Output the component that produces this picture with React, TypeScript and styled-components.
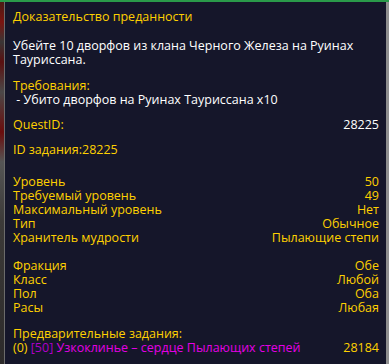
import React from "react";
import styled, { createGlobalStyle } from "styled-components";

const Global = createGlobalStyle`
  html, body { margin: 0; padding: 0; background: #15162a; }
  body { font-family: "Open Sans", "Noto Sans", sans-serif; }
`;

const Frame = styled.div`
  width: 389px;
  height: 364px;
  overflow: hidden;
  border-top: 2px solid #2a9a4a;
  box-sizing: border-box;
  display: flex;
  background: #15162a;
`;

const GameStrip = styled.div`
  width: 4px;
  flex: none;
  background: linear-gradient(
    180deg,
    #4a1a14 0px,
    #7a1410 20px,
    #3a3636 40px,
    #5a1010 60px,
    #4b4848 90px,
    #6a0c0c 130px,
    #555 160px,
    #3c3a38 220px,
    #2c2a2a 364px
  );
`;

const Panel = styled.div`
  flex: 1;
  border-left: 1px solid #6b6b6b;
  border-right: 3px solid #8f8f8f;
  background: #15162a;
  padding: 8px 7px 0 8px;
  font-size: 12.5px;
  line-height: 14px;
  color: #ffd100;
`;

const Section = styled.div<{ $gap: number }>`
  margin-top: ${(p) => p.$gap}px;
`;

const Line = styled.div<{ $color?: string }>`
  color: ${(p) => p.$color || "#ffd100"};
  white-space: nowrap;
`;

const Text = styled.div`
  color: #ffffff;
`;

const Row = styled.div`
  display: flex;
  justify-content: space-between;
  white-space: nowrap;
`;

const Value = styled.span<{ $color?: string }>`
  color: ${(p) => p.$color || "#ffd100"};
`;

const Span = styled.span<{ $color: string }>`
  color: ${(p) => p.$color};
`;

const rows1: [string, string][] = [
  ["Уровень", "50"],
  ["Требуемый уровень", "49"],
  ["Максимальный уровень", "Нет"],
  ["Тип", "Обычное"],
  ["Хранитель мудрости", "Пылающие степи"],
];

const rows2: [string, string][] = [
  ["Фракция", "Обе"],
  ["Класс", "Любой"],
  ["Пол", "Оба"],
  ["Расы", "Любая"],
];

export default function App() {
  return (
    <>
      <Global />
      <Frame>
        <GameStrip />
        <Panel>
          <Line>Доказательство преданности</Line>
          <Section $gap={15}>
            <Text>Убейте 10 дворфов из клана Черного Железа на Руинах Тауриссана.</Text>
          </Section>
          <Section $gap={12}>
            <Line>Требования:</Line>
            <Line $color="#ffffff">&nbsp;- Убито дворфов на Руинах Тауриссана x10</Line>
          </Section>
          <Section $gap={11}>
            <Row>
              <span>QuestID:</span>
              <Value $color="#ffffff">28225</Value>
            </Row>
          </Section>
          <Section $gap={11}>
            <Line>ID задания:28225</Line>
          </Section>
          <Section $gap={18}>
            {rows1.map(([k, v]) => (
              <Row key={k}>
                <span>{k}</span>
                <Value>{v}</Value>
              </Row>
            ))}
          </Section>
          <Section $gap={14}>
            {rows2.map(([k, v]) => (
              <Row key={k}>
                <span>{k}</span>
                <Value>{v}</Value>
              </Row>
            ))}
          </Section>
          <Section $gap={12}>
            <Line>Предварительные задания:</Line>
            <Row>
              <span>
                (0) <Span $color="#b000c8">[50]</Span>{" "}
                <Span $color="#e400e4">Узкоклинье – сердце Пылающих степей</Span>
              </span>
              <Value>28184</Value>
            </Row>
          </Section>
        </Panel>
      </Frame>
    </>
  );
}
